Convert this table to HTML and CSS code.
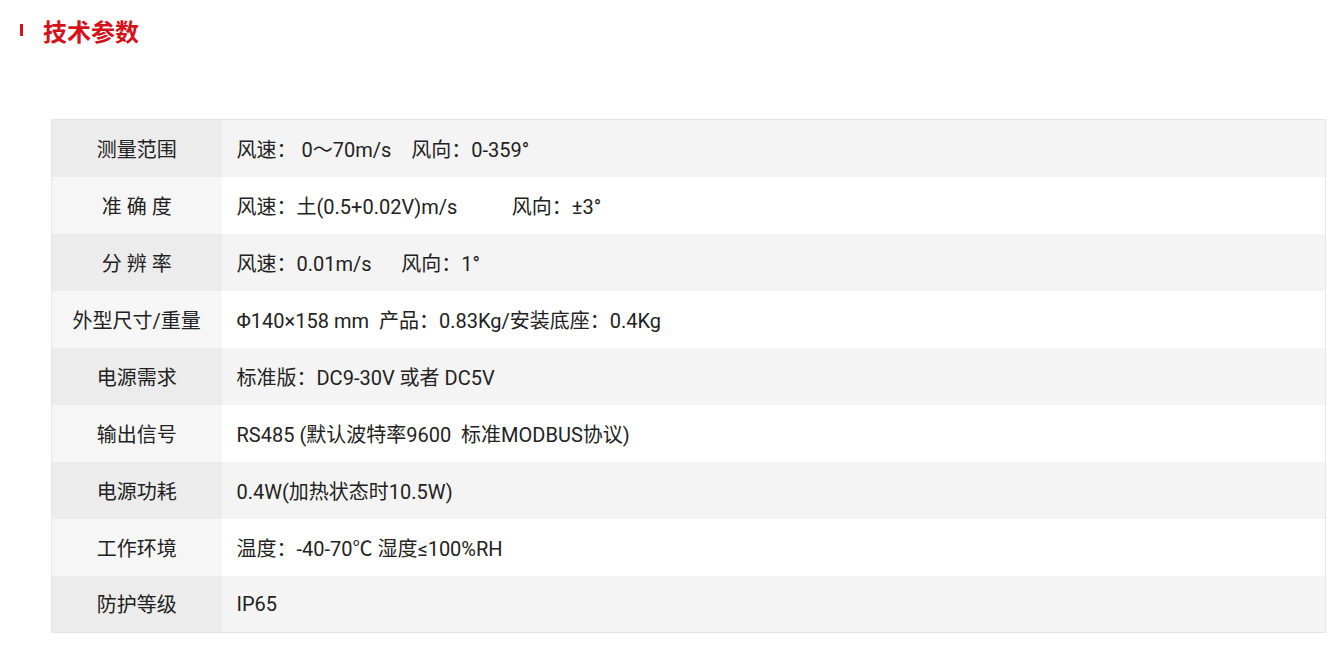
FILE: index.html
```html
<!DOCTYPE html>
<html lang="zh-CN">
<head>
<meta charset="utf-8">
<title>技术参数</title>
<link rel="stylesheet" href="styles.css">
</head>
<body>
<div class="page">
  <h2 class="title"><span class="title-bar"></span>技术参数</h2>
  <table class="spec">
    <tbody>
      <tr><th>测量范围</th><td>风速： 0～70m/s&nbsp;&nbsp;&nbsp;&nbsp;风向：0-359°</td></tr>
      <tr><th>准 确 度</th><td>风速：土(0.5+0.02V)m/s&nbsp;&nbsp;&nbsp;&nbsp;&nbsp;&nbsp;&nbsp;&nbsp;&nbsp;&nbsp;&nbsp;风向：±3°</td></tr>
      <tr><th>分 辨 率</th><td>风速：0.01m/s&nbsp;&nbsp;&nbsp;&nbsp;&nbsp;&nbsp;风向：1°</td></tr>
      <tr><th>外型尺寸/重量</th><td>Φ140×158 mm&nbsp;&nbsp;产品：0.83Kg/安装底座：0.4Kg</td></tr>
      <tr><th>电源需求</th><td>标准版：DC9-30V 或者 DC5V</td></tr>
      <tr><th>输出信号</th><td>RS485 (默认波特率9600&nbsp;&nbsp;标准MODBUS协议)</td></tr>
      <tr><th>电源功耗</th><td>0.4W(加热状态时10.5W)</td></tr>
      <tr><th>工作环境</th><td>温度：-40-70<span class="cjk">℃</span> 湿度≤100%RH</td></tr>
      <tr><th>防护等级</th><td>IP65</td></tr>
    </tbody>
  </table>
</div>
</body>
</html>
```
FILE: styles.css
```css
* { box-sizing: border-box; }
html, body { margin: 0; padding: 0; background: #fff; }
body {
  font-family: Roboto, "Noto Sans CJK SC", sans-serif;
  color: #222;
}
.page {
  padding: 16px 17px 0 20px;
}
.title {
  margin: 0;
  display: flex;
  align-items: center;
  font-size: 24px;
  line-height: 30px;
  font-weight: 700;
  color: #d3121b;
  font-family: "Noto Sans CJK SC", sans-serif;
}
.title-bar {
  width: 3px;
  height: 12px;
  background: #d3121b;
  margin: -3px 20px 0 0;
}
.spec {
  margin: 73px 0 0 31px;
  width: 1275px;
  border-collapse: collapse;
  border: 1px solid #e6e6e6;
  font-size: 20px;
}
.spec th, .spec td {
  height: 57px;
  padding: 0;
  vertical-align: middle;
  font-weight: 400;
  white-space: nowrap;
}
.spec th {
  width: 170px;
  text-align: center;
  background: #f6f6f6;
}
.spec td {
  padding-left: 15px;
  text-align: left;
  background: #fff;
}
.spec tr:nth-child(odd) th { background: #ececec; }
.spec tr:nth-child(odd) td { background: #f4f4f4; }
.cjk { font-family: "Noto Sans CJK SC", sans-serif; }
```
